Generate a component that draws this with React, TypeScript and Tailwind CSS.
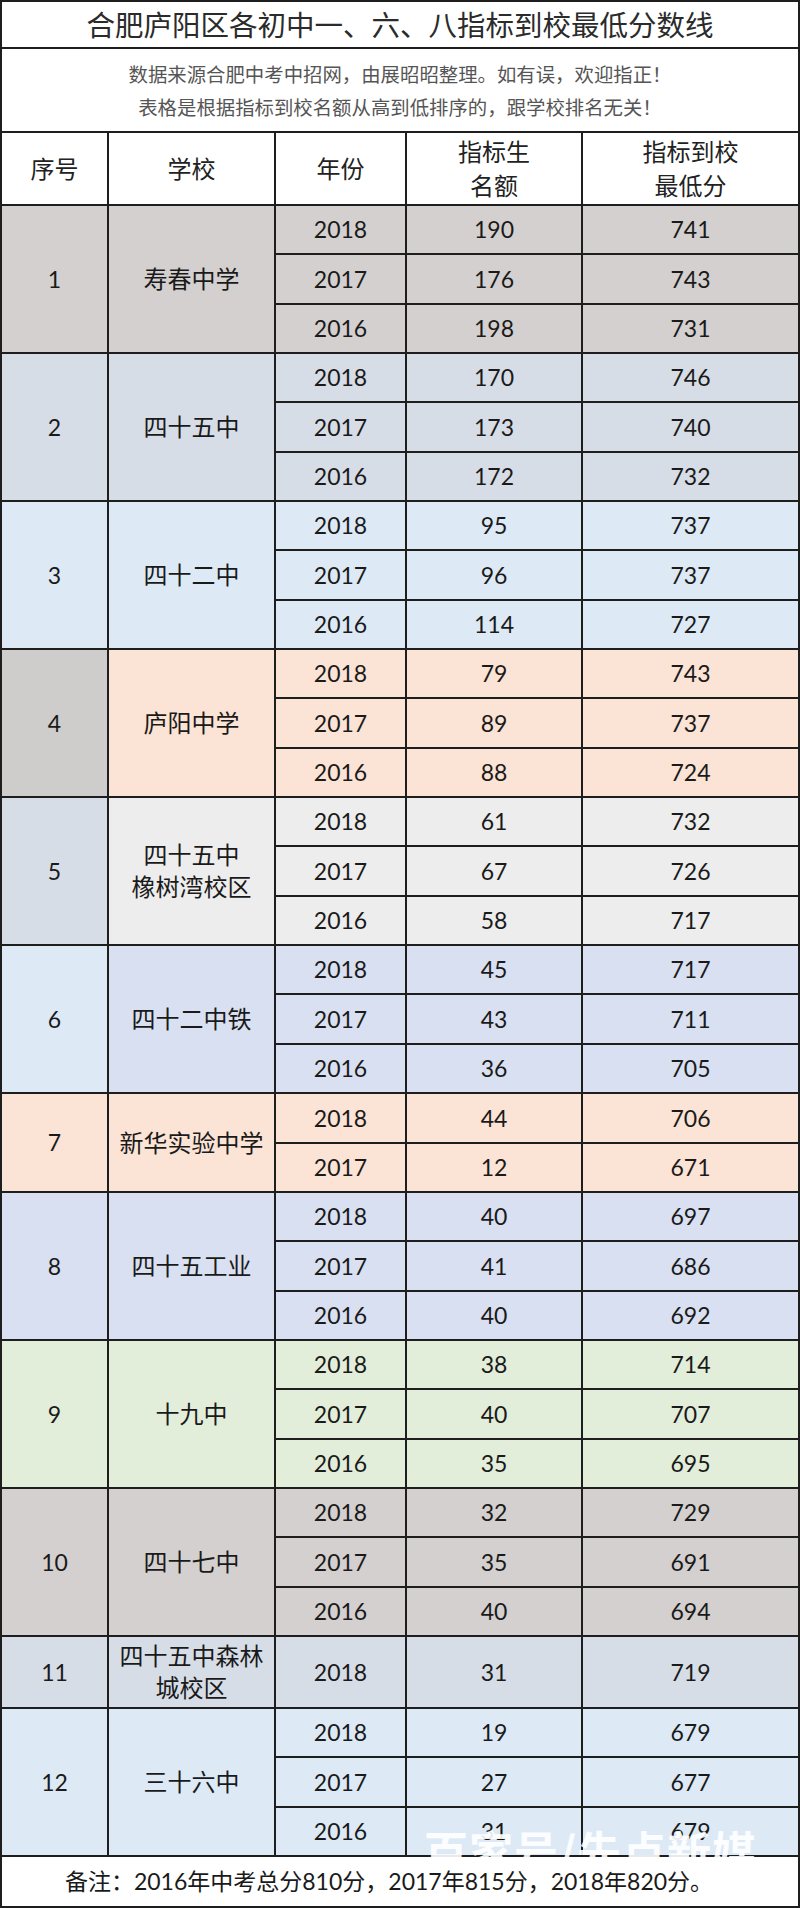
import React from "react";

type Group = {
  n: string;
  school: string[];
  numBg: string;
  bg: string;
  rows: [string, string, string][];
};

const groups: Group[] = [
  { n: "1", school: ["寿春中学"], numBg: "bg-[#d3d0cf]", bg: "bg-[#d3d0cf]", rows: [["2018", "190", "741"], ["2017", "176", "743"], ["2016", "198", "731"]] },
  { n: "2", school: ["四十五中"], numBg: "bg-[#d7dde6]", bg: "bg-[#d7dde6]", rows: [["2018", "170", "746"], ["2017", "173", "740"], ["2016", "172", "732"]] },
  { n: "3", school: ["四十二中"], numBg: "bg-[#ddeaf6]", bg: "bg-[#ddeaf6]", rows: [["2018", "95", "737"], ["2017", "96", "737"], ["2016", "114", "727"]] },
  { n: "4", school: ["庐阳中学"], numBg: "bg-[#cfcdcc]", bg: "bg-[#fbe3d5]", rows: [["2018", "79", "743"], ["2017", "89", "737"], ["2016", "88", "724"]] },
  { n: "5", school: ["四十五中", "橡树湾校区"], numBg: "bg-[#d7dde6]", bg: "bg-[#ededed]", rows: [["2018", "61", "732"], ["2017", "67", "726"], ["2016", "58", "717"]] },
  { n: "6", school: ["四十二中铁"], numBg: "bg-[#ddeaf6]", bg: "bg-[#d9e0f1]", rows: [["2018", "45", "717"], ["2017", "43", "711"], ["2016", "36", "705"]] },
  { n: "7", school: ["新华实验中学"], numBg: "bg-[#fbe3d5]", bg: "bg-[#fbe3d5]", rows: [["2018", "44", "706"], ["2017", "12", "671"]] },
  { n: "8", school: ["四十五工业"], numBg: "bg-[#d9e0f1]", bg: "bg-[#d9e0f1]", rows: [["2018", "40", "697"], ["2017", "41", "686"], ["2016", "40", "692"]] },
  { n: "9", school: ["十九中"], numBg: "bg-[#e2eeda]", bg: "bg-[#e2eeda]", rows: [["2018", "38", "714"], ["2017", "40", "707"], ["2016", "35", "695"]] },
  { n: "10", school: ["四十七中"], numBg: "bg-[#d3d0cf]", bg: "bg-[#d3d0cf]", rows: [["2018", "32", "729"], ["2017", "35", "691"], ["2016", "40", "694"]] },
  { n: "11", school: ["四十五中森林", "城校区"], numBg: "bg-[#d7dde6]", bg: "bg-[#d7dde6]", rows: [["2018", "31", "719"]] },
  { n: "12", school: ["三十六中"], numBg: "bg-[#ddeaf6]", bg: "bg-[#ddeaf6]", rows: [["2018", "19", "679"], ["2017", "27", "677"], ["2016", "31", "679"]] },
];

function rowHeights(count: number): string[] {
  if (count === 3) return ["h-[47px]", "h-[48px]", "h-[47px]"];
  if (count === 2) return ["h-[48px]", "h-[47px]"];
  return ["h-[70px]"];
}

function GroupBlock({ g }: { g: Group }) {
  const hs = rowHeights(g.rows.length);
  return (
    <div className="flex gap-[2px]">
      <div className={`w-[105px] shrink-0 flex items-center justify-center text-[23px] ${g.numBg}`}>
        {g.n}
      </div>
      <div className={`w-[165px] shrink-0 flex flex-col items-center justify-center text-[24px] leading-[32px] ${g.bg}`}>
        {g.school.map((s) => (
          <div key={s}>{s}</div>
        ))}
      </div>
      <div className="flex-1 flex flex-col gap-[2px]">
        {g.rows.map((r, i) => (
          <div key={i} className={`flex gap-[2px] ${hs[i]}`}>
            <div className={`w-[129px] shrink-0 flex items-center justify-center text-[23px] ${g.bg}`}>{r[0]}</div>
            <div className={`w-[174px] shrink-0 flex items-center justify-center text-[23px] ${g.bg}`}>{r[1]}</div>
            <div className={`flex-1 flex items-center justify-center text-[23px] ${g.bg}`}>{r[2]}</div>
          </div>
        ))}
      </div>
    </div>
  );
}

export default function App() {
  return (
    <div className="relative w-[800px] h-[1908px] bg-[#1e1e1e] p-[2px] flex flex-col gap-[2px] text-[#1a1a1a] font-[Lato,'Noto_Sans_CJK_SC',sans-serif]">
      <div className="h-[45px] bg-white flex items-center justify-center text-[28.5px] text-[#2b2b2b] font-['Noto_Sans_CJK_SC',sans-serif]">
        合肥庐阳区各初中一、六、八指标到校最低分数线
      </div>
      <div className="h-[82px] bg-white flex flex-col items-center justify-center text-[19.4px] leading-[33px] text-[#555555] font-['Noto_Sans_CJK_SC',sans-serif]">
        <div>数据来源合肥中考中招网，由展昭昭整理。如有误，欢迎指正！</div>
        <div>表格是根据指标到校名额从高到低排序的，跟学校排名无关！</div>
      </div>
      <div className="h-[71px] flex gap-[2px] text-[24px] leading-[34px] text-[#222222]">
        <div className="w-[105px] shrink-0 bg-white flex items-center justify-center">序号</div>
        <div className="w-[165px] shrink-0 bg-white flex items-center justify-center">学校</div>
        <div className="w-[129px] shrink-0 bg-white flex items-center justify-center">年份</div>
        <div className="w-[174px] shrink-0 bg-white flex flex-col items-center justify-center">
          <div>指标生</div>
          <div>名额</div>
        </div>
        <div className="flex-1 bg-white flex flex-col items-center justify-center">
          <div>指标到校</div>
          <div>最低分</div>
        </div>
      </div>
      {groups.map((g) => (
        <GroupBlock key={g.n} g={g} />
      ))}
      <div className="h-[49px] bg-white flex items-center justify-center text-[23px] pr-[22px]">
        备注：2016年中考总分810分，2017年815分，2018年820分。
      </div>
      <div className="absolute left-[424px] top-[1822px] text-[44px] leading-[56px] text-white/90 font-['Noto_Sans_CJK_SC',sans-serif] font-bold tracking-[1px] pointer-events-none">
        百家号/先点新媒
      </div>
    </div>
  );
}
